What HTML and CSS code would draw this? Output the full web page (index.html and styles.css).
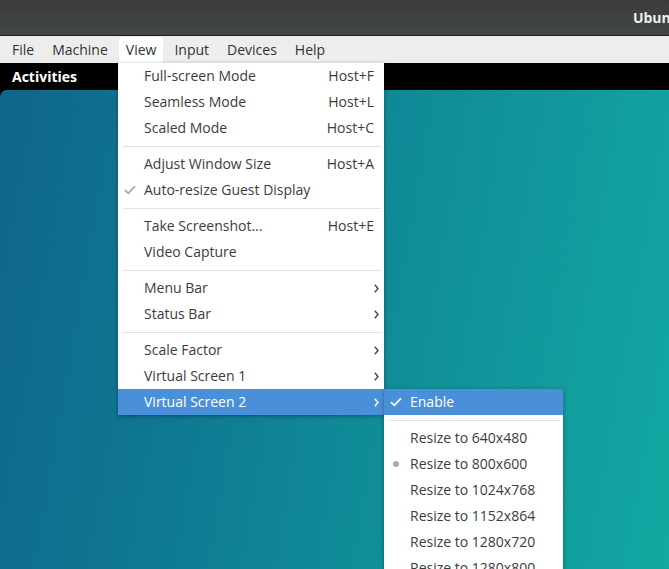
FILE: index.html
```html
<!DOCTYPE html>
<html>
<head>
<meta charset="utf-8">
<link rel="stylesheet" href="styles.css">
</head>
<body>
<div class="window">
  <header class="titlebar"><span class="title">Ubuntu</span></header>
  <nav class="menubar">
    <span class="mb-item">File</span>
    <span class="mb-item">Machine</span>
    <span class="mb-item active">View</span>
    <span class="mb-item">Input</span>
    <span class="mb-item">Devices</span>
    <span class="mb-item">Help</span>
  </nav>
  <div class="screen">
    <div class="topbar"><span class="activities">Activities</span></div>
    <div class="desktop"></div>
  </div>

  <ul class="menu main-menu">
    <li class="item"><span class="label">Full-screen Mode</span><span class="accel">Host+F</span></li>
    <li class="item"><span class="label">Seamless Mode</span><span class="accel">Host+L</span></li>
    <li class="item"><span class="label">Scaled Mode</span><span class="accel">Host+C</span></li>
    <li class="sep"></li>
    <li class="item"><span class="label">Adjust Window Size</span><span class="accel">Host+A</span></li>
    <li class="item"><svg class="check gray" width="12" height="10" viewBox="0 0 12 10"><path d="M1 5.2 L4.3 8.3 L11 1.3" fill="none" stroke="#a8a8a8" stroke-width="1.8"/></svg><span class="label">Auto-resize Guest Display</span></li>
    <li class="sep"></li>
    <li class="item"><span class="label">Take Screenshot...</span><span class="accel">Host+E</span></li>
    <li class="item"><span class="label">Video Capture</span></li>
    <li class="sep"></li>
    <li class="item sub"><span class="label">Menu Bar</span><svg class="arrow" width="5" height="9" viewBox="0 0 5 9"><path d="M0.8 0.8 L4 4.5 L0.8 8.2" fill="none" stroke="#444" stroke-width="1.4"/></svg></li>
    <li class="item sub"><span class="label">Status Bar</span><svg class="arrow" width="5" height="9" viewBox="0 0 5 9"><path d="M0.8 0.8 L4 4.5 L0.8 8.2" fill="none" stroke="#444" stroke-width="1.4"/></svg></li>
    <li class="sep"></li>
    <li class="item sub"><span class="label">Scale Factor</span><svg class="arrow" width="5" height="9" viewBox="0 0 5 9"><path d="M0.8 0.8 L4 4.5 L0.8 8.2" fill="none" stroke="#444" stroke-width="1.4"/></svg></li>
    <li class="item sub"><span class="label">Virtual Screen 1</span><svg class="arrow" width="5" height="9" viewBox="0 0 5 9"><path d="M0.8 0.8 L4 4.5 L0.8 8.2" fill="none" stroke="#444" stroke-width="1.4"/></svg></li>
    <li class="item sub hl"><span class="label">Virtual Screen 2</span><svg class="arrow" width="5" height="9" viewBox="0 0 5 9"><path d="M0.8 0.8 L4 4.5 L0.8 8.2" fill="none" stroke="#ffffff" stroke-width="1.4"/></svg></li>
  </ul>

  <ul class="menu sub-menu">
    <li class="item hl"><svg class="check" width="12" height="10" viewBox="0 0 12 10"><path d="M1 5.2 L4.3 8.3 L11 1.3" fill="none" stroke="#ffffff" stroke-width="1.8"/></svg><span class="label">Enable</span></li>
    <li class="sep"></li>
    <li class="item"><span class="label">Resize to 640x480</span></li>
    <li class="item"><span class="dot"></span><span class="label">Resize to 800x600</span></li>
    <li class="item"><span class="label">Resize to 1024x768</span></li>
    <li class="item"><span class="label">Resize to 1152x864</span></li>
    <li class="item"><span class="label">Resize to 1280x720</span></li>
    <li class="item"><span class="label">Resize to 1280x800</span></li>
  </ul>
</div>
</body>
</html>
```

FILE: styles.css
```css
* { box-sizing: border-box; }
html, body { margin: 0; padding: 0; }
body {
  width: 669px;
  height: 569px;
  overflow: hidden;
  font-family: "Open Sans", "Noto Sans", sans-serif;
  background: #000;
}
.window {
  position: relative;
  width: 669px;
  height: 569px;
  display: flex;
  flex-direction: column;
}
.titlebar {
  height: 36px;
  flex: none;
  background: linear-gradient(#393c3b, #434745);
  border-bottom: 1px solid #1c1e1d;
  display: flex;
  align-items: center;
  justify-content: flex-end;
  overflow: hidden;
}
.title {
  color: #eef0ee;
  font-weight: bold;
  font-size: 14px;
  margin-right: -17px;
  padding-bottom: 1px;
}
.menubar {
  height: 27px;
  flex: none;
  background: #ededed;
  display: flex;
  align-items: flex-end;
  padding-left: 5px;
  font-size: 14px;
  color: #2e3436;
}
.mb-item {
  height: 26px;
  line-height: 25px;
  padding: 0 7px;
  margin-right: 4px;
}
.mb-item.active {
  background: #fff;
  border-radius: 3px 3px 0 0;
}
.screen {
  flex: 1;
  display: flex;
  flex-direction: column;
  background: #000;
}
.topbar {
  height: 27px;
  flex: none;
  display: flex;
  align-items: center;
  padding-left: 12px;
  padding-bottom: 1px;
}
.activities {
  color: #fff;
  font-weight: bold;
  font-size: 14px;
}
.desktop {
  flex: 1;
  border-radius: 7px 0 0 0;
  background:
    linear-gradient(100deg, #0f668b 0%, #0f7892 30%, #108e99 60%, #13a8a2 100%);
}
.menu {
  position: absolute;
  margin: 0;
  padding: 0;
  list-style: none;
  background: #fff;
  font-size: 14px;
  color: #3c3c3c;
  box-shadow: 0 1px 4px rgba(0,0,0,0.35);
}
.main-menu {
  left: 118px;
  top: 63px;
  width: 266px;
}
.sub-menu {
  left: 384px;
  top: 389px;
  width: 179px;
}
.item {
  position: relative;
  height: 26px;
  display: flex;
  align-items: center;
  padding-left: 26px;
  padding-right: 10px;
  padding-bottom: 1px;
}
.label { flex: 1; white-space: nowrap; }
.accel { white-space: nowrap; }
.item.hl {
  background: #4a90d9;
  color: #fff;
}
.sep {
  height: 10px;
  display: flex;
  align-items: center;
  padding: 0 3px 0 5px;
}
.sep::before {
  content: "";
  display: block;
  flex: 1;
  height: 1px;
  background: #e2e2e2;
}
.check {
  position: absolute;
  left: 6px;
  top: 8px;
}
.arrow {
  position: absolute;
  right: 5px;
  top: 9px;
}
.dot {
  position: absolute;
  left: 9px;
  top: 10px;
  width: 6px;
  height: 6px;
  border-radius: 50%;
  background: #a8a8a8;
}
```
